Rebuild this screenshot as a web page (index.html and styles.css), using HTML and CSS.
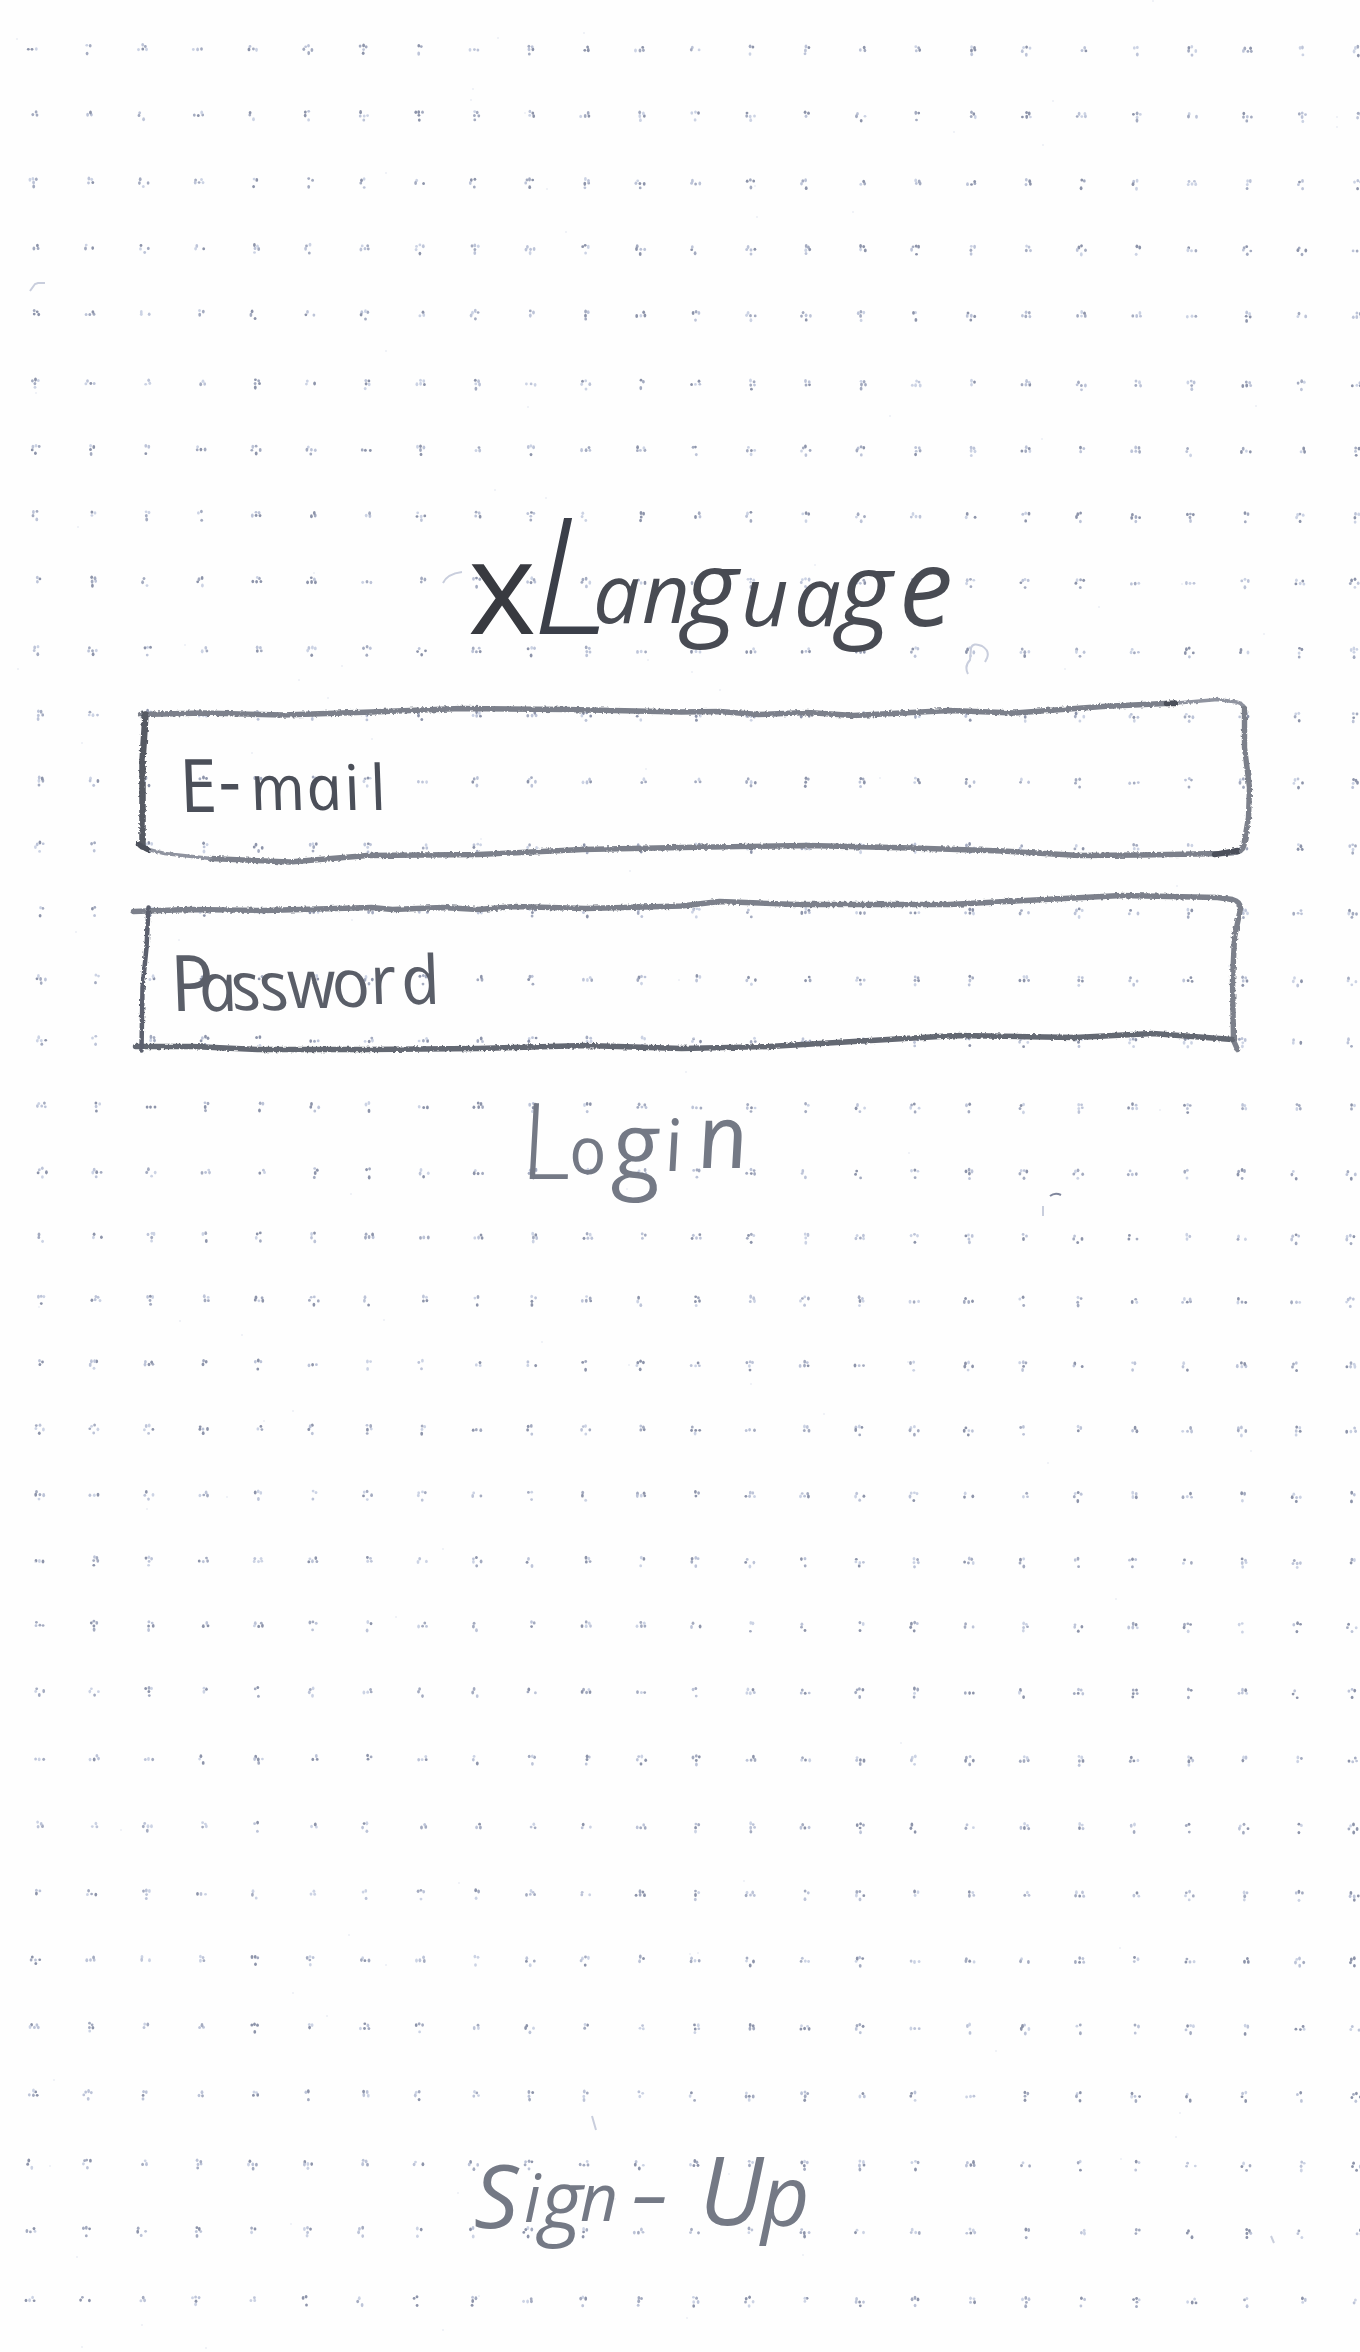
FILE: index.html
```html
<!DOCTYPE html>
<html lang="en">
<head>
<meta charset="utf-8">
<title>xLanguage</title>
<link rel="stylesheet" href="styles.css">
</head>
<body>
<svg class="paper" viewBox="0 0 1360 2352" aria-hidden="true">
  <g id="specks"></g>
  <g class="stray">
    <path d="M30 291l5-7 3-1h7M443 583q4-9 19-11M968 674q-4-8 2-14l1-12q2-6 11-2 8 5 5 12l-2 4M1043 1206v10M592 2116l4 14M1271 2236l3 7"/>
    <path class="strong" d="M1050 1196q5-4 11-1"/>
  </g>
</svg>
<main class="screen">
  <svg class="title" viewBox="0 500 1360 196" role="heading">
    <text class="ink" y="624"><tspan class="title-x" x="468" y="634">x</tspan><tspan class="title-l" x="532" y="634">L</tspan><tspan x="593 642" y="623">an</tspan><tspan class="title-g" x="684" y="625">g</tspan><tspan x="741 794" y="626">ua</tspan><tspan class="title-g" x="838" y="627">g</tspan><tspan class="title-e" x="899" y="626">e</tspan></text>
  </svg>
  <svg class="field" viewBox="0 696 1360 190">
    <defs>
      <filter id="pencil" x="-5%" y="-10%" width="110%" height="120%">
        <feTurbulence type="fractalNoise" baseFrequency=".35" numOctaves="2" seed="4"/>
        <feDisplacementMap in="SourceGraphic" scale="3.5"/>
      </filter>
    </defs>
    <g class="border" filter="url(#pencil)">
      <path d="M139 714L202 712.500 281 714.500 370 711.500 459 708 566 709 680 711.500 718 711 757 714 806 712 852 715 948 710 1013 712.500 1101 706 1174 702.500"/>
      <path class="thin" d="M1170 703L1216 699 1235 701.500Q1243 703 1243 710"/>
      <path d="M1243 708L1243 747 1248 787 1247 817 1243 840Q1243 850 1235 852L1220 853 1139 854.500 1078 855 1001 850.500 910 847.500 806 845 680 847 581 849 477 854 366 855 288 861.500 209 858"/>
      <path class="thin" d="M209 858L163 853 143 848"/>
      <path class="heavy" d="M144 714L141 760 141 846"/>
      <path class="dark" d="M137 844L146 849M1213 854L1236 850M1165 703h9"/>
    </g>
    <text class="ink label" transform="translate(184 812) skewX(14)"><tspan class="cap" x="0">E</tspan><tspan class="dash" x="41" y="-6">-</tspan><tspan x="71 127 165 191" y="-2">mail</tspan></text>
  </svg>
  <svg class="field second" viewBox="0 886 1360 180">
    <g class="border" filter="url(#pencil)">
      <path d="M132 911L188 909 263 910 370 907 391 909 441 907 477 909 513 906 584 908 680 905.500 718 901 795 904 948 904 1024 900 1120 895 1216 897 1231 899Q1239 901 1239 908L1233 937 1231 980 1232 1040 1236 1049"/>
      <path class="bottom" d="M1231 1039L1151 1033 1074 1037 955 1035 852 1041 768 1046 680 1048 584 1045 477 1048 366 1049 256 1049 191 1046 134 1046"/>
      <path class="side" d="M147 907L145 947 141 987 140 1050"/>
    </g>
    <text class="ink label password" transform="translate(175 1010) skewX(14)"><tspan class="cap" x="0" y="1">P</tspan><tspan x="28 61 89 118 162" y="1 0 0 -2 -3">asswo</tspan><tspan x="201 232" y="-6 -6">rd</tspan></text>
  </svg>
  <svg class="login" viewBox="0 1066 1360 170" role="button">
    <text class="ink soft" transform="translate(524 1174) skewX(9)"><tspan class="login-l" x="0" y="5">L</tspan><tspan x="48" y="0">o</tspan><tspan class="login-g" x="90" y="6">g</tspan><tspan class="login-i" x="144" y="-3">i</tspan><tspan class="login-n" x="178" y="-6">n</tspan></text>
  </svg>
  <svg class="signup" viewBox="0 2130 1360 150" role="link">
    <text class="ink soft"><tspan class="sign-s" x="474" y="2228">S</tspan><tspan x="524" y="2222">i</tspan><tspan class="sign-g" x="540" y="2229">g</tspan><tspan x="580" y="2221">n</tspan><tspan class="sign-dash" x="630" y="2234">-</tspan><tspan class="sign-u" x="699" y="2225">U</tspan><tspan class="sign-p" x="761" y="2226">p</tspan></text>
  </svg>
</main>
<script src="paper.js"></script>
</body>
</html>
```
FILE: styles.css
```css
body {
  margin: 0;
  background: #fefefe;
}

.screen {
  position: relative;
  display: flex;
  flex-direction: column;
  box-sizing: border-box;
  width: 1360px;
  height: 2352px;
  padding: 500px 0 72px;
}

.screen svg {
  display: block;
  flex: none;
  width: 1360px;
  overflow: visible;
}

.paper {
  position: absolute;
  top: 0;
  left: 0;
  width: 1360px;
  height: 2352px;
}

.title { height: 196px; }
.field { height: 190px; }
.second { height: 180px; }
.login { height: 170px; }
.signup { height: 150px; margin-top: auto; }

.ink {
  font-family: "Open Sans", "Noto Sans", sans-serif;
  font-style: italic;
  font-size: 83px;
  fill: #484b53;
}

.title-x { font-size: 130px; font-weight: 500; font-style: normal; fill: #383a40; }
.title-l { font-size: 162px; font-weight: 300; fill: #3b3f49; }
.title-g { font-size: 104px; }
.title-e { font-size: 108px; }

.label { font-size: 63px; fill: #4b4f59; }
.label .cap { font-size: 74px; }
.label .dash { font-size: 72px; }
.password { font-size: 68px; fill: #5a5e68; }
.password .cap { font-size: 78px; }

.soft { font-size: 66px; fill: #747985; }
.login-l { font-size: 106px; font-weight: 300; }
.login-g { font-size: 96px; }
.login-i { font-size: 72px; }
.login-n { font-size: 88px; }
.sign-s { font-size: 88px; }
.sign-g { font-size: 82px; }
.sign-dash { font-size: 126px; font-weight: 300; }
.sign-u { font-size: 95px; }
.sign-p { font-size: 84px; }

.border {
  transform: translate(1.5px, .5px);
}

.border path {
  fill: none;
  stroke: #7c808b;
  stroke-width: 5.4;
  stroke-linecap: round;
  stroke-linejoin: round;
}

.border .thin { stroke-width: 3.5; stroke: #8f939f; }
.border .heavy { stroke-width: 6.5; stroke: #565a64; }
.border .dark { stroke: #4c505a; }
.border .bottom { stroke: #636772; }
.border .side { stroke: #5c616e; stroke-width: 4.5; }

.stray path {
  fill: none;
  stroke: #c9cedd;
  stroke-width: 2;
}

.stray .strong {
  stroke: #7f869c;
}
```
FILE: paper.js
```js
// Dot-grid paper: every grid point is a small cluster of printed specks.
const rows = [33,77,122,166,210,256,300,344,388,434,477,521,565,608,653,694,738,782,825,867,910,953,997,1041,1084,1128,1173,1218,1263,1307,1352,1397,1443,1488,1534];
const left = [[0,21],[8,24.500],[14,27],[18,28],[20,26],[26,26],[28,24],[34,19.500]];
const right = [[0,905],[5,904],[10,902],[18,900],[25,901],[34,905]];

function lerp(points, r) {
  for (let i = 1; i < points.length; i++) {
    const [a, x] = points[i - 1], [b, y] = points[i];
    if (r <= b) return x + (y - x) * (r - a) / (b - a);
  }
}

let seed = 17;
function rand() {
  seed = (seed * 16807) % 2147483647;
  return seed / 2147483647;
}

const tones = ['#a4abc0', '#bdc4d8', '#8d94aa', '#ccd3e4'];
const spots = [[-4, 0], [0, -4], [4, 0], [0, 4], [0, 0], [-3, -3], [3, -3]];
let out = '';
rows.forEach((row, r) => {
  for (let c = 0; c < 25; c++) {
    const a = lerp(left, r), b = lerp(right, r);
    const x = 1.5 * (a + (b - a) * c / 24);
    const y = 1.5 * (row + 1.5 * c / 24) - 1;
    const start = Math.floor(rand() * 7), count = 3 + Math.floor(rand() * 3);
    for (let i = 0; i < count; i++) {
      const s = spots[(start + i * 2) % 7];
      out += `<ellipse cx="${(x + s[0] + rand()).toFixed(1)}" cy="${(y + s[1] + rand()).toFixed(1)}" rx="1.4" ry="${(1.3 + rand() * .8).toFixed(1)}" fill="${tones[Math.floor(rand() * 4)]}"/>`;
    }
  }
});
for (let i = 0; i < 110; i++) {
  out += `<circle cx="${(rand() * 1360).toFixed(0)}" cy="${(rand() * 2352).toFixed(0)}" r=".8" fill="#dfe3ee"/>`;
}
document.getElementById('specks').innerHTML = out;
```
